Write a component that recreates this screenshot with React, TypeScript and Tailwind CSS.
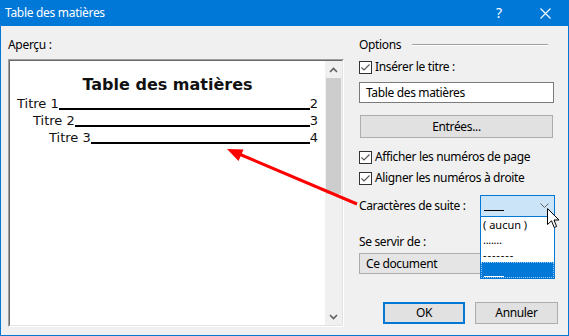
import React from "react";

const ui = { fontFamily: '"Noto Sans", "Open Sans", sans-serif' };
const pv = { fontFamily: '"DejaVu Sans", Verdana, sans-serif' };

function Check({ label }: { label: string }) {
  return (
    <div className="flex h-[16px] items-center">
      <div className="flex h-[13px] w-[13px] items-center justify-center border border-[#333333] bg-white">
        <svg width="11" height="11" viewBox="0 0 11 11">
          <path d="M1.5 5.5 L4 8 L9.5 2.5" fill="none" stroke="#555" strokeWidth="1.1" />
        </svg>
      </div>
      <span className="ml-[3px] text-[12px] leading-[16px] tracking-[-0.35px] text-black">{label}</span>
    </div>
  );
}

function Row({ indent, label, num }: { indent: string; label: string; num: string }) {
  return (
    <div className={`flex h-[17px] items-end pr-[7px] ${indent}`}>
      <span className="text-[13px] leading-[17px] text-[#111]">{label}</span>
      <div className="mb-[2px] h-[2px] flex-1 bg-black" />
      <span className="text-[13px] leading-[17px] text-[#111]">{num}</span>
    </div>
  );
}

function Chev({ up }: { up?: boolean }) {
  return (
    <svg width="9" height="6" viewBox="0 0 9 6">
      <path d={up ? "M1 5 L4.5 1.5 L8 5" : "M1 1 L4.5 4.5 L8 1"} fill="none" stroke="#606060" strokeWidth="1.6" />
    </svg>
  );
}

export default function App() {
  return (
    <div className="relative flex h-[336px] w-[569px] flex-col bg-[#0078d7] px-[1px] pb-[1px]" style={ui}>
      {/* Title bar */}
      <div className="flex h-[26px] items-center text-white">
        <span className="ml-[4px] text-[12px] tracking-[-0.3px]">Table des matières</span>
        <span className="ml-auto text-[14px] leading-none">?</span>
        <svg className="ml-[38px] mr-[17px]" width="11" height="11" viewBox="0 0 11 11">
          <path d="M0.5 0.5 L10.5 10.5 M10.5 0.5 L0.5 10.5" stroke="white" strokeWidth="1.1" />
        </svg>
      </div>

      {/* Body */}
      <div className="flex flex-1 gap-[15px] bg-[#f0f0f0] pb-[8px] pl-[7px] pt-[11px] text-black">
        {/* Left column */}
        <div className="flex w-[336px] flex-col">
          <div className="h-[16px] text-[12px] leading-[16px] tracking-[-0.3px]">Aperçu :</div>
          <div className="mt-[6px] flex h-[268px] border border-b-white border-l-[#a0a0a0] border-r-white border-t-[#a0a0a0]">
            <div className="flex flex-1 border border-b-[#e3e3e3] border-l-[#696969] border-r-[#e3e3e3] border-t-[#696969] bg-white">
              <div className="flex flex-1 flex-col pt-[14px]" style={pv}>
                <div className="h-[20px] text-center text-[16px] font-bold leading-[20px] text-[#111]">Table des matières</div>
                <Row indent="pl-[7px]" label="Titre 1" num="2" />
                <Row indent="pl-[23px]" label="Titre 2" num="3" />
                <Row indent="pl-[39px]" label="Titre 3" num="4" />
              </div>
              <div className="flex w-[17px] flex-col bg-[#f0f0f0]">
                <div className="flex h-[17px] items-center justify-center"><Chev up /></div>
                <div className="mx-[1px] h-[116px] bg-[#cdcdcd]" />
                <div className="flex-1" />
                <div className="flex h-[17px] items-center justify-center"><Chev /></div>
              </div>
            </div>
          </div>
        </div>

        {/* Right column */}
        <div className="flex w-[199px] flex-col text-[12px] tracking-[-0.35px]">
          <div className="flex h-[16px] items-center">
            <span className="leading-[16px]">Options</span>
            <div className="ml-[11px] h-[2px] w-[136px] border-b border-t border-b-white border-t-[#a0a0a0]" />
          </div>
          <div className="mt-[6px]"><Check label="Insérer le titre :" /></div>
          <div className="mt-[7px] flex h-[21px] w-[195px] items-center border border-[#7a7a7a] bg-white pl-[6px] leading-[16px]">
            Table des matières
          </div>
          <div className="ml-[1px] mt-[12px] flex h-[23px] w-[193px] items-center justify-center border border-[#adadad] bg-[#e1e1e1]">
            Entrées...
          </div>
          <div className="mt-[11px]"><Check label="Afficher les numéros de page" /></div>
          <div className="mt-[5px]"><Check label="Aligner les numéros à droite" /></div>

          <div className="relative z-10 mt-[9px] flex h-[22px] items-center">
            <span className="leading-[16px]">Caractères de suite :</span>
            <div className="relative ml-auto mr-[3px] h-[22px] w-[75px]">
              <div className="flex h-[22px] w-full items-center border border-[#0078d7] bg-[#cce4f7] pl-[3px] pr-[5px]">
                <div className="mt-[8px] h-[1px] w-[20px] bg-black" />
                <svg className="ml-auto" width="9" height="6" viewBox="0 0 9 6">
                  <path d="M0.5 0.5 L4.5 4.5 L8.5 0.5" fill="none" stroke="#606060" strokeWidth="1" />
                </svg>
              </div>
              <div className="absolute left-0 top-[22px] flex h-[62px] w-[75px] flex-col border border-t-0 border-[#0078d7] bg-white">
                <div className="h-[15px] pl-[2px] text-[11px] leading-[15px] tracking-[0px]">( aucun )</div>
                <div className="h-[15px] pl-[2px] text-[11px] leading-[15px] tracking-[-0.3px]">.......</div>
                <div className="h-[15px] pl-[2px] text-[11px] leading-[15px] tracking-[0.9px]">-------</div>
                <div className="flex flex-1 items-end border border-dotted border-[#99c9ef] bg-[#0078d7] pl-[2px]">
                  <div className="h-[1px] w-[20px] bg-white" />
                </div>
              </div>
            </div>
          </div>

          <div className="mt-[17px] h-[16px] leading-[16px]">Se servir de :</div>
          <div className="mt-[3px] flex h-[21px] w-[196px] items-center border border-[#adadad] bg-[#e5e5e5] pl-[6px] leading-[16px]">
            Ce document
          </div>

          <div className="mt-[28px] flex justify-end gap-[10px]">
            <div className="flex h-[22px] w-[82px] items-center justify-center border-2 border-[#0078d7] bg-[#e1e1e1]">OK</div>
            <div className="flex h-[22px] w-[83px] items-center justify-center border border-[#adadad] bg-[#e1e1e1]">Annuler</div>
          </div>
        </div>
      </div>

      {/* Red annotation arrow */}
      <svg className="pointer-events-none absolute left-0 top-0 z-20" width="569" height="336" viewBox="0 0 569 336">
        <line x1="357" y1="204" x2="239" y2="154" stroke="#ff0000" strokeWidth="3" />
        <polygon points="227,149 243.5,149.5 238.5,161" fill="#ff0000" />
      </svg>

      {/* Mouse cursor */}
      <svg className="pointer-events-none absolute left-[547px] top-[208px] z-30" width="13" height="21" viewBox="0 0 13 21">
        <path d="M0.5 0.5 L0.5 16.5 L4.5 12.8 L7.2 19.5 L9.6 18.5 L7 12 L12 12 Z" fill="white" stroke="black" strokeWidth="1" strokeLinejoin="round" />
      </svg>
    </div>
  );
}
